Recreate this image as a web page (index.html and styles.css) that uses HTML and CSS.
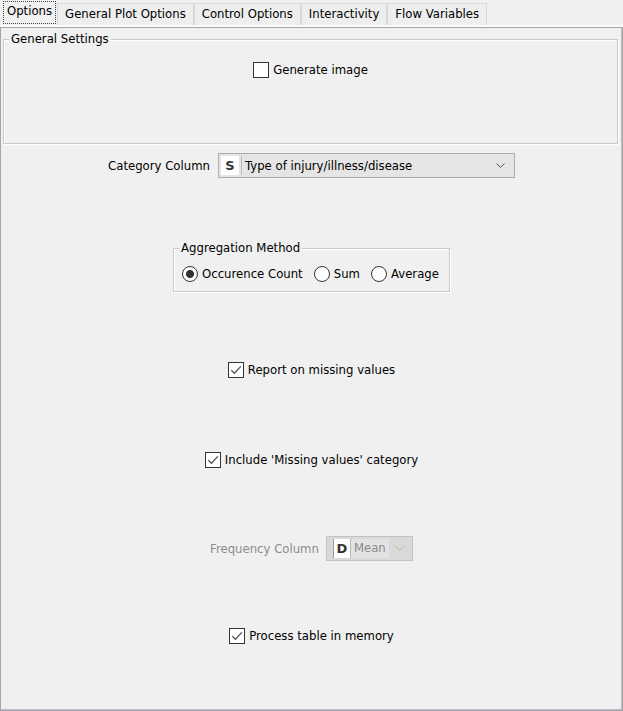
FILE: index.html
```html
<!DOCTYPE html>
<html>
<head>
    <link rel="stylesheet" href="styles.css">
</head>
<body>
<div class="dialog">
    <div class="tabs">
        <div class="tab selected"><span class="focus">Options</span></div>
        <div class="tab">General Plot Options</div>
        <div class="tab">Control Options</div>
        <div class="tab">Interactivity</div>
        <div class="tab">Flow Variables</div>
    </div>

    <div class="panel">
        <fieldset class="group general">
            <legend>General Settings</legend>
            <label class="check">
                <span class="box"></span>
                <span>Generate image</span>
            </label>
        </fieldset>

        <div class="row category">
            <span class="label">Category Column</span>
            <div class="combo wide">
                <span class="type">S</span>
                <span class="sep"></span>
                <span class="value">Type of injury/illness/disease</span>
                <svg class="arrow" width="9" height="5" viewBox="0 0 9 5"><path d="M0.5 0.5 L4.5 4.5 L8.5 0.5" fill="none" stroke="#555" stroke-width="1"/></svg>
            </div>
        </div>

        <fieldset class="group aggregation">
            <legend>Aggregation Method</legend>
            <div class="radios">
                <label class="radio"><span class="dot on"></span><span>Occurence Count</span></label>
                <label class="radio"><span class="dot"></span><span>Sum</span></label>
                <label class="radio"><span class="dot"></span><span>Average</span></label>
            </div>
        </fieldset>

        <label class="check report">
            <span class="box"><svg width="14" height="14" viewBox="0 0 14 14"><path d="M2.3 7.2 L5.4 10.3 L11.8 3.4" fill="none" stroke="#555" stroke-width="1.3"/></svg></span>
            <span>Report on missing values</span>
        </label>

        <label class="check include">
            <span class="box"><svg width="14" height="14" viewBox="0 0 14 14"><path d="M2.3 7.2 L5.4 10.3 L11.8 3.4" fill="none" stroke="#555" stroke-width="1.3"/></svg></span>
            <span>Include 'Missing values' category</span>
        </label>

        <div class="row frequency">
            <span class="label disabled">Frequency Column</span>
            <div class="combo small disabled">
                <span class="type">D</span>
                <span class="sep"></span>
                <span class="value">Mean</span>
                <svg class="arrow" width="9" height="5" viewBox="0 0 9 5"><path d="M0.5 0.5 L4.5 4.5 L8.5 0.5" fill="none" stroke="#b4b4b4" stroke-width="1"/></svg>
            </div>
        </div>

        <label class="check process">
            <span class="box"><svg width="14" height="14" viewBox="0 0 14 14"><path d="M2.3 7.2 L5.4 10.3 L11.8 3.4" fill="none" stroke="#555" stroke-width="1.3"/></svg></span>
            <span>Process table in memory</span>
        </label>
    </div>
</div>
</body>
</html>
```

FILE: styles.css
```css
body {
    margin: 0;
    background: #f0f0f0;
    font-family: "DejaVu Sans", sans-serif;
    font-size: 11.7px;
    line-height: 14px;
    color: #000;
}

.dialog {
    width: 623px;
    height: 711px;
    display: flex;
    flex-direction: column;
}

/* tab strip */
.tabs {
    display: flex;
    align-items: flex-end;
    height: 25px;
    padding-left: 2px;
    border-bottom: 2px solid #fbfbfb;
}
.tab {
    height: 22px;
    line-height: 21px;
    padding: 0 7px;
    border: 1px solid #d9d9d9;
    border-bottom: none;
    box-sizing: border-box;
    background: #eeeeee;
    white-space: nowrap;
}
.tab.selected {
    height: 25px;
    padding: 1px;
    border: none;
    background: #f0f0f0;
}
.tab.selected .focus {
    display: block;
    height: 23px;
    box-sizing: border-box;
    line-height: 19px;
    padding: 0 3px;
    border: 1px dotted #444;
}

/* content panel */
.panel {
    flex: 1;
    display: flex;
    flex-direction: column;
    align-items: center;
    border: 1px solid #a3a7ab;
    box-shadow: inset -1px -1px 0 #babec2;
}

.group {
    margin: 0;
    padding: 0;
    min-width: 0;
    border: 1px solid #c9c9c9;
    box-shadow: inset 1px 1px 0 #fff, 1px 1px 0 #fff;
}
.group legend {
    margin-left: 5px;
    padding: 0 2px;
    line-height: 14px;
    background: #f0f0f0;
}

.general {
    align-self: stretch;
    margin: 4px 4px 0 2px;
    padding: 16px 0 65px;
}
.general .check {
    margin: 0 auto;
}

.aggregation {
    margin-top: 63px;
}
.radios {
    display: flex;
    padding: 11px 10px 9px 8px;
}
.radio {
    display: flex;
    align-items: center;
    gap: 4px;
    height: 16px;
}
.radio + .radio {
    margin-left: 11px;
}
.dot {
    width: 16px;
    height: 16px;
    box-sizing: border-box;
    border: 1px solid #333;
    border-radius: 50%;
    background: #fff;
}
.dot.on {
    background: radial-gradient(circle, #333 0, #333 3.6px, #fff 4.4px);
}

/* checkboxes */
.check {
    display: flex;
    align-items: center;
    gap: 4px;
    width: max-content;
    height: 16px;
}
.box {
    display: flex;
    align-items: center;
    justify-content: center;
    width: 16px;
    height: 16px;
    box-sizing: border-box;
    border: 1px solid #333;
    background: #fff;
}
.report {
    margin-top: 70px;
}
.include {
    margin-top: 74px;
}
.process {
    margin-top: 67px;
}

/* label + combo rows */
.row {
    display: flex;
    align-items: center;
    gap: 8px;
}
.category {
    margin-top: 9px;
}
.frequency {
    margin-top: 68px;
    gap: 7px;
}
.label.disabled {
    color: #8c8c8c;
}

.combo {
    display: flex;
    align-items: center;
    height: 25px;
    box-sizing: border-box;
    padding: 0 2px;
    border: 1px solid #acacac;
    background: #e5e5e5;
}
.combo.wide {
    width: 297px;
}
.combo.small {
    width: 87px;
}
.type {
    width: 18px;
    height: 19px;
    background: #fff;
    color: #333;
    font-weight: bold;
    font-size: 13px;
    line-height: 19px;
    text-align: center;
}
.sep {
    width: 1px;
    height: 19px;
    margin: 0 3px 0 2px;
    background: #b8b8b8;
}
.value {
    flex: 1;
    white-space: nowrap;
}
.arrow {
    margin-right: 7px;
}

.combo.disabled {
    border-color: #c3c3c3;
    background: #d9d9d9;
}
.combo.disabled .type {
    width: 16px;
    margin-left: 4px;
    border-left: 1px solid #9c9c9c;
}
.combo.disabled .sep {
    margin: 0;
}
.combo.disabled .value {
    flex: none;
    padding: 0 3px;
    line-height: 19px;
    background: #e3e3e3;
    color: #8c8c8c;
}
.combo.disabled .arrow {
    margin: 0 auto;
}
```
